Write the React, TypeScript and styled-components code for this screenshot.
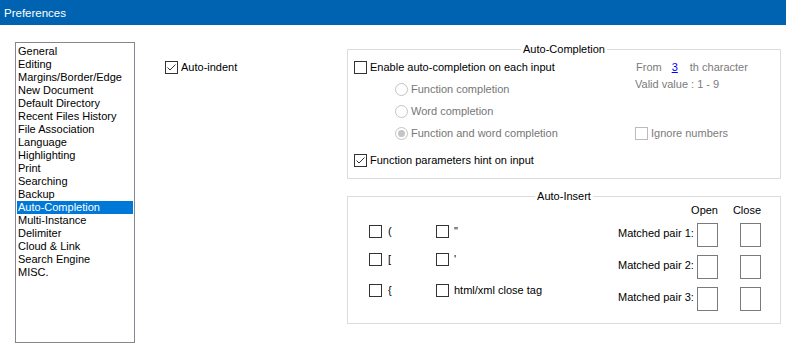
import React from 'react';
import styled, { createGlobalStyle } from 'styled-components';

const GlobalStyle = createGlobalStyle`
  html, body {
    margin: 0;
    padding: 0;
    background: #ffffff;
  }
  body {
    font-family: "Liberation Sans", Arial, sans-serif;
    font-size: 11px;
    color: #000000;
  }
`;

const pages = [
  'General',
  'Editing',
  'Margins/Border/Edge',
  'New Document',
  'Default Directory',
  'Recent Files History',
  'File Association',
  'Language',
  'Highlighting',
  'Print',
  'Searching',
  'Backup',
  'Auto-Completion',
  'Multi-Instance',
  'Delimiter',
  'Cloud & Link',
  'Search Engine',
  'MISC.',
];

const CheckBox = ({ checked = false, disabled = false }: { checked?: boolean; disabled?: boolean }) => (
  <Box $disabled={disabled}>
    {checked && (
      <svg width="11" height="11" viewBox="0 0 11 11">
        <polyline points="1.5,5.5 4,8 9.5,2.5" fill="none" stroke="#333" strokeWidth="1" />
      </svg>
    )}
  </Box>
);

const Radio = ({ checked = false }: { checked?: boolean }) => (
  <RadioCircle>{checked && <RadioDot />}</RadioCircle>
);

const App = () => {
  return (
    <>
      <GlobalStyle />
      <Window>
        <TitleBar>Preferences</TitleBar>
        <Content>
          <ListBox>
            {pages.map((p) => (
              <ListItem key={p} $selected={p === 'Auto-Completion'}>
                {p}
              </ListItem>
            ))}
          </ListBox>

          <MiddleColumn>
            <Option>
              <CheckBox checked />
              <span>Auto-indent</span>
            </Option>
          </MiddleColumn>

          <RightColumn>
            <Group $height={130}>
              <Legend>Auto-Completion</Legend>
              <CompletionGrid>
                <Option>
                  <CheckBox />
                  <span>Enable auto-completion on each input</span>
                </Option>
                <FromRow>
                  <span>From</span>
                  <LinkValue>3</LinkValue>
                  <span>th character</span>
                </FromRow>

                <RadioOption>
                  <Radio />
                  <span>Function completion</span>
                </RadioOption>
                <ValidText>Valid value : 1 - 9</ValidText>

                <RadioOption>
                  <Radio />
                  <span>Word completion</span>
                </RadioOption>
                <div />

                <RadioOption>
                  <Radio checked />
                  <span>Function and word completion</span>
                </RadioOption>
                <Option $disabled>
                  <CheckBox disabled />
                  <span>Ignore numbers</span>
                </Option>

                <WideOption>
                  <CheckBox checked />
                  <span>Function parameters hint on input</span>
                </WideOption>
              </CompletionGrid>
            </Group>

            <Group $height={128}>
              <Legend>Auto-Insert</Legend>
              <InsertBody>
                <BracketGrid>
                  <BracketOption $gap={6}>
                    <CheckBox />
                    <span>(</span>
                  </BracketOption>
                  <BracketOption $gap={5}>
                    <CheckBox />
                    <span>"</span>
                  </BracketOption>
                  <BracketOption $gap={6}>
                    <CheckBox />
                    <span>[</span>
                  </BracketOption>
                  <BracketOption $gap={5}>
                    <CheckBox />
                    <span>'</span>
                  </BracketOption>
                  <BracketOption $gap={6}>
                    <CheckBox />
                    <span>{'{'}</span>
                  </BracketOption>
                  <BracketOption $gap={5}>
                    <CheckBox />
                    <span>html/xml close tag</span>
                  </BracketOption>
                </BracketGrid>

                <PairTable>
                  <PairRow $header>
                    <div />
                    <ColHead>Open</ColHead>
                    <div />
                    <ColHead>Close</ColHead>
                  </PairRow>
                  {[1, 2, 3].map((n) => (
                    <PairRow key={n}>
                      <PairLabel>Matched pair {n}:</PairLabel>
                      <EditBox />
                      <div />
                      <EditBox />
                    </PairRow>
                  ))}
                </PairTable>
              </InsertBody>
            </Group>
          </RightColumn>
        </Content>
      </Window>
    </>
  );
};

const Window = styled.div`
  width: 786px;
  height: 363px;
  background: #ffffff;
  overflow: hidden;
`;

const TitleBar = styled.div`
  height: 25px;
  background: #0063b1;
  color: #ffffff;
  font-size: 11.5px;
  line-height: 26px;
  padding-left: 4px;
`;

const Content = styled.div`
  display: flex;
  align-items: flex-start;
  padding-left: 15px;
`;

const ListBox = styled.div`
  box-sizing: border-box;
  width: 120px;
  height: 301px;
  margin-top: 17px;
  border: 1px solid #828790;
  padding: 2px 1px 0 1px;
`;

const ListItem = styled.div<{ $selected?: boolean }>`
  height: 13px;
  line-height: 13px;
  padding-left: 1px;
  white-space: nowrap;
  background: ${(p) => (p.$selected ? '#0078d7' : 'transparent')};
  color: ${(p) => (p.$selected ? '#ffffff' : '#000000')};
`;

const MiddleColumn = styled.div`
  width: 182px;
  margin-left: 30px;
  margin-top: 36px;
`;

const RightColumn = styled.div`
  width: 434px;
  margin-top: 24px;
  display: flex;
  flex-direction: column;
  gap: 17px;
`;

const Group = styled.div<{ $height: number }>`
  position: relative;
  box-sizing: border-box;
  height: ${(p) => p.$height}px;
  border: 1px solid #dcdcdc;
`;

const Legend = styled.div`
  position: absolute;
  top: -7px;
  left: 50%;
  transform: translateX(-50%);
  background: #ffffff;
  padding: 0 2px;
  line-height: 13px;
  white-space: nowrap;
`;

const Option = styled.label<{ $disabled?: boolean }>`
  display: flex;
  align-items: center;
  gap: 3px;
  line-height: 13px;
  white-space: nowrap;
  color: ${(p) => (p.$disabled ? '#7b7b7b' : '#000000')};
`;

const WideOption = styled(Option)`
  grid-column: 1 / span 2;
`;

const RadioOption = styled(Option)`
  margin-left: 41px;
  color: #767676;
`;

const Box = styled.span<{ $disabled?: boolean }>`
  box-sizing: border-box;
  width: 13px;
  height: 13px;
  flex: none;
  border: 1px solid ${(p) => (p.$disabled ? '#bcbcbc' : '#333333')};
  background: #ffffff;
  display: flex;
  align-items: center;
  justify-content: center;
`;

const RadioCircle = styled.span`
  box-sizing: border-box;
  width: 13px;
  height: 13px;
  flex: none;
  border: 1px solid #c4c4c4;
  border-radius: 50%;
  background: #ffffff;
  display: flex;
  align-items: center;
  justify-content: center;
`;

const RadioDot = styled.span`
  width: 7px;
  height: 7px;
  border-radius: 50%;
  background: #c4c4c4;
`;

const CompletionGrid = styled.div`
  display: grid;
  grid-template-columns: 281px 1fr;
  grid-template-rows: 21px 22px 22px 23px 30px;
  align-items: center;
  padding: 7px 0 0 6px;
`;

const FromRow = styled.div`
  display: flex;
  align-items: center;
  line-height: 13px;
  color: #7b7b7b;
  padding-left: 1px;

  & > span:first-child {
    margin-right: 10px;
  }
`;

const LinkValue = styled.span`
  color: #0000ff;
  text-decoration: underline;
  margin-right: 12px;
`;

const ValidText = styled.div`
  align-self: start;
  line-height: 13px;
  color: #7b7b7b;
`;

const InsertBody = styled.div`
  display: flex;
  align-items: flex-start;
  padding-left: 21px;
`;

const BracketGrid = styled.div`
  display: grid;
  grid-template-columns: 67px auto;
  grid-template-rows: 28px 31px 13px;
  align-items: start;
  margin-top: 28px;
`;

const BracketOption = styled(Option)<{ $gap: number }>`
  gap: ${(p) => p.$gap}px;
`;

const PairTable = styled.div`
  margin-left: auto;
  margin-right: 19px;
  padding-top: 7px;
  display: flex;
  flex-direction: column;
  gap: 8px;
`;

const PairRow = styled.div<{ $header?: boolean }>`
  display: grid;
  grid-template-columns: 79px 21px 22px 21px;
  align-items: center;
  height: ${(p) => (p.$header ? '13px' : '24px')};
  margin-bottom: ${(p) => (p.$header ? '-2px' : '0')};
`;

const ColHead = styled.div`
  justify-self: end;
  line-height: 13px;
  white-space: nowrap;
`;

const PairLabel = styled.div`
  text-align: right;
  padding-right: 4px;
  line-height: 13px;
  white-space: nowrap;
  margin-top: -3px;
`;

const EditBox = styled.div`
  box-sizing: border-box;
  width: 21px;
  height: 24px;
  border: 1px solid #7a7a7a;
  background: #ffffff;
`;

export default App;
